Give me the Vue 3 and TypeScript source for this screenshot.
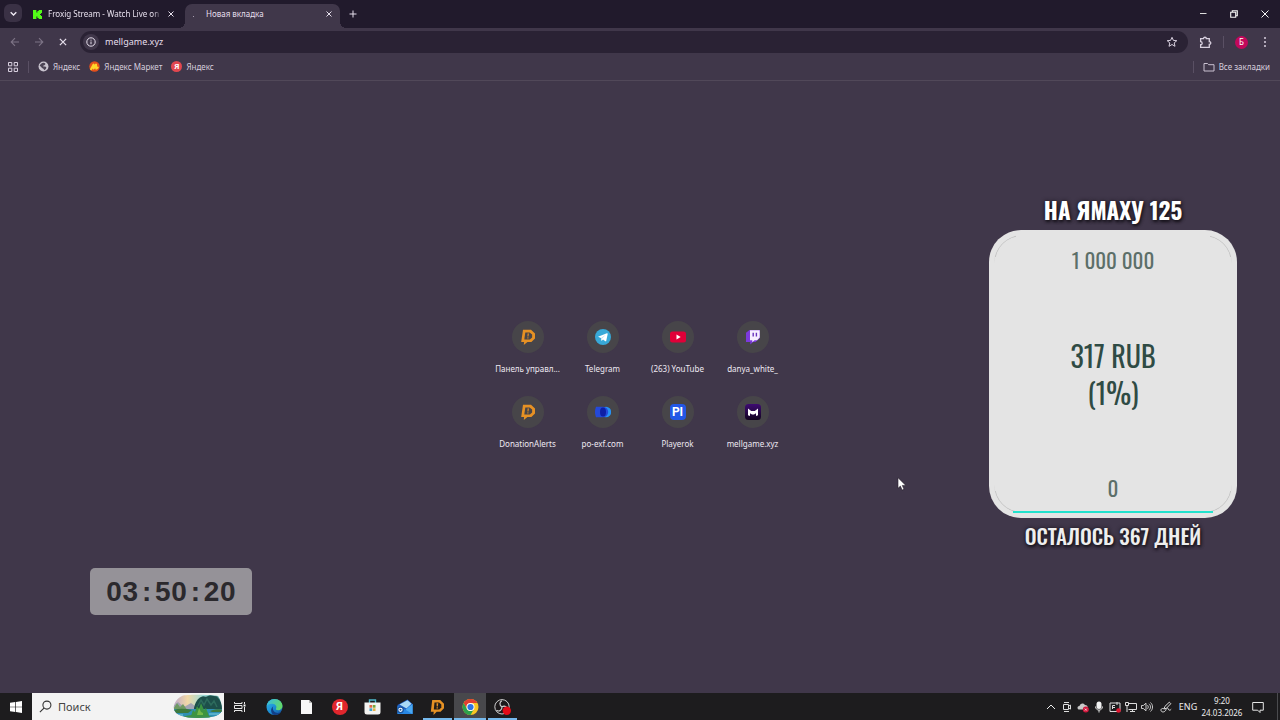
<script setup lang="ts">
import { ref } from 'vue'

interface LinkItem { label: string; icon: string; letter?: string }

const address = ref('mellgame.xyz')
const query = ref('')

const bookmarks: LinkItem[] = [
  { label: 'Яндекс', icon: 'globe' },
  { label: 'Яндекс Маркет', icon: 'market' },
  { label: 'Яндекс', icon: 'yandex-soft', letter: 'Я' },
]

const shortcuts: LinkItem[] = [
  { label: 'Панель управл...', icon: 'donation' },
  { label: 'Telegram', icon: 'telegram' },
  { label: '(263) YouTube', icon: 'youtube' },
  { label: 'danya_white_', icon: 'twitch' },
  { label: 'DonationAlerts', icon: 'donation' },
  { label: 'po-exf.com', icon: 'exchange' },
  { label: 'Playerok', icon: 'playerok', letter: 'PI' },
  { label: 'mellgame.xyz', icon: 'mellgame' },
]

const apps = [
  { label: 'Edge', icon: 'edge', state: '' },
  { label: 'Документ', icon: 'file', state: '' },
  { label: 'Яндекс', icon: 'yandex', letter: 'Я', state: '' },
  { label: 'Microsoft Store', icon: 'store', state: '' },
  { label: 'Почта', icon: 'mail', state: '' },
  { label: 'DonationAlerts', icon: 'donation-dark', state: 'open' },
  { label: 'Chrome', icon: 'chrome', state: 'open current' },
  { label: 'OBS', icon: 'obs', state: 'open' },
]

const tray = [
  { label: 'Скрытые значки', icon: 'chevron-up' },
  { label: 'Камера', icon: 'camera' },
  { label: 'OneDrive', icon: 'cloud' },
  { label: 'Микрофон', icon: 'mic' },
  { label: 'Безопасность', icon: 'shield' },
  { label: 'Сеть', icon: 'network' },
  { label: 'Звук', icon: 'sound' },
]

const timer = '03:50:20'.split('')
</script>

<template>
  <div class="desktop">
    <svg class="sprite" aria-hidden="true">
      <defs>
        <linearGradient id="g-edge" x1="0" y1="0" x2="1" y2="1">
          <stop offset="0" stop-color="#2fb6e8" /><stop offset="0.5" stop-color="#1c8fd6" /><stop offset="1" stop-color="#124f9e" />
        </linearGradient>
        <linearGradient id="g-edge2" x1="0" y1="0" x2="1" y2="0.4">
          <stop offset="0" stop-color="#35b8ea" /><stop offset="1" stop-color="#62d86b" />
        </linearGradient>
        <linearGradient id="g-mell" x1="0" y1="0" x2="0" y2="1">
          <stop offset="0" stop-color="#3e0b72" /><stop offset="1" stop-color="#12041f" />
        </linearGradient>
        <linearGradient id="g-sky" x1="0" y1="0" x2="1" y2="0">
          <stop offset="0" stop-color="#b9a5cf" /><stop offset="0.3" stop-color="#f1d8a6" /><stop offset="0.6" stop-color="#9fdcd8" /><stop offset="1" stop-color="#3e8f8a" />
        </linearGradient>
        <clipPath id="c-scene"><path d="M2 15C1 10 5 4 10 2c6-2 30-1 36 0 3 4 4 10 4 14-1 5-8 8-24 8C12 24 3 21 2 15Z" /></clipPath>
      </defs>
      <symbol id="i-kick" viewBox="0 0 9 9"><path d="M0 0h3.400v2.500h1V1h1.300V0H9v3H8v1H7v1h1v1h1v3H5.700V8H4.400V6.500h-1V9H0Z" fill="#53fc18" /></symbol>
      <symbol id="i-down" viewBox="0 0 8 8"><path d="m1.500 2.800 2.500 2.500 2.500-2.500" fill="none" stroke="#f0ebf5" stroke-width="1.200" /></symbol>
      <symbol id="i-close" viewBox="0 0 8 8"><path d="m1.500 1.500 5 5m0-5-5 5" fill="none" stroke="#e6dfec" stroke-width="1" /></symbol>
      <symbol id="i-plus" viewBox="0 0 8 8"><path d="M4 .5v7M.5 4h7" fill="none" stroke="#e6dfec" stroke-width="1" /></symbol>
      <symbol id="i-back" viewBox="0 0 10 10"><path d="M9 5H1.500M5 1.200 1.200 5 5 8.800" fill="none" stroke="#7d7486" stroke-width="1.100" /></symbol>
      <symbol id="i-forward" viewBox="0 0 10 10"><path d="M1 5h7.500M5 1.200 8.800 5 5 8.800" fill="none" stroke="#7d7486" stroke-width="1.100" /></symbol>
      <symbol id="i-info" viewBox="0 0 10 10"><circle cx="5" cy="5" r="4.200" fill="none" stroke="#e6dfec" /><path d="M5 4.500v2.700M5 2.700v1" stroke="#e6dfec" /></symbol>
      <symbol id="i-star" viewBox="0 0 12 12"><path d="m6 1.300 1.400 3.100 3.400.3-2.600 2.200.8 3.400L6 8.500l-3 1.800.8-3.400-2.600-2.200 3.400-.3Z" fill="none" stroke="#d8d0df" stroke-width="1" /></symbol>
      <symbol id="i-puzzle" viewBox="0 0 12 12"><path d="M1.500 2.500h2.700c0-1.800 2.600-1.800 2.600 0h2.700v2.700c1.900 0 1.900 2.600 0 2.600v2.700h-8V8c1.900 0 1.900-2.800 0-2.800Z" fill="none" stroke="#d8d0df" stroke-width="1.200" /></symbol>
      <symbol id="i-dots" viewBox="0 0 4 12"><circle cx="2" cy="2" r="1" /><circle cx="2" cy="6" r="1" /><circle cx="2" cy="10" r="1" /></symbol>
      <symbol id="i-grid" viewBox="0 0 12 12"><path d="M1.500 1.500h3.300v3.300H1.500ZM7.200 1.500h3.300v3.300H7.200ZM1.500 7.200h3.300v3.300H1.500ZM7.200 7.200h3.300v3.300H7.200Z" fill="none" stroke="#d8d0df" stroke-width="1" /></symbol>
      <symbol id="i-folder" viewBox="0 0 12 12"><path d="M1 2.500h3.500l1.200 1.200H11V10H1Z" fill="none" stroke="#c9c1d0" stroke-width="1" /></symbol>
      <symbol id="i-globe" viewBox="0 0 12 12"><circle cx="6" cy="6" r="5.400" fill="#c9c4cf" /><path d="M6.200 1.800c1.600.4 2.400 1.200 1.500 2.200-.9.900-2.200.4-2.200 1.700 1.300.6 2.700 0 3.400.9.500 1-.4 2.800-2.200 3.500-.3-1.400-.7-2-2-2.300C3.500 7.200 3 5.700 1.800 5.300c.5-2 2.200-3.500 4.400-3.500Z" fill="#4d4556" /></symbol>
      <symbol id="i-market" viewBox="0 0 12 12"><circle cx="6" cy="6" r="5.700" fill="#e5501c" /><path d="M2.200 8.900 5 3.900l.1 4.400 2.600-4.400.2 4.400 1.600-1.200" fill="none" stroke="#ffd62a" stroke-width="2.200" stroke-linejoin="round" stroke-linecap="round" /></symbol>
      <symbol id="i-donation" viewBox="0 0 16 16"><path d="M3 .8h8L15 4.600v4.900l-3.600 3.500H7.400l-3.600 3 .3-3H1.200Z" fill="#e69124" /><path d="M5.300 3.400h4.300l2.500 2.200v3l-2.200 2H4.300Z" fill="#474549" /><path d="m7.600 4.300 1.500.1-.5 3.100H7.300Zm-.3 3.900h1.200v1.200H7.200Z" fill="#c9822c" /></symbol>
      <symbol id="i-donation-dark" viewBox="0 0 16 16"><path d="M2.700 1h8L14.500 4.700v4.600L11 12.800H7.200L4 16l.2-3.200H1.300Z" fill="#e69124" /><path d="M5 3.600h4.600l2.200 2v2.900l-2 1.900H4.300Z" fill="#201c19" /><path d="m7 4.200 1.800.1-.5 3.100H7.200Zm.1 4h1.300v1.200H7Z" fill="#e69124" /></symbol>
      <symbol id="i-telegram" viewBox="0 0 16 16"><circle cx="8" cy="8" r="8" fill="#38a9d8" /><path d="m3 7.800 8.900-3.600c.5-.2.900.1.800.7l-1.500 7c-.1.500-.5.600-.9.300L8 10.500l-1.300 1.300-.4-.3-.4-2.400Z" fill="#fff" /><path d="m6 9.100 4.800-3.300-3.900 4-.2 1.900Z" fill="#bcdff0" /></symbol>
      <symbol id="i-youtube" viewBox="0 0 16 16"><rect y="2.500" width="16" height="11" rx="2.500" fill="#e00038" /><path d="m6.500 5.600 4.200 2.400-4.200 2.400Z" fill="#fff" /></symbol>
      <symbol id="i-twitch" viewBox="0 0 16 16"><path d="M1 3.700 4.500 1H15v8l-4.500 4H8l-2.700 2.500V13H1Z" fill="#7c39dc" /><path d="M5 1.200h9.700v7.400l-2.600 2.600H9.500l-2.200 2v-2H5Z" fill="#f7eeff" /><path d="M8.200 3.700v3.800m3.200-3.800v3.800" stroke="#6932bc" stroke-width="1.400" /></symbol>
      <symbol id="i-exchange" viewBox="0 0 16 16"><circle cx="11" cy="8" r="5.200" fill="#2692f5" /><path d="M1 2.800h7a5.200 5.200 0 0 1 0 10.400H1C.3 11 0 9.500 0 8s.3-3 1-5.200Z" fill="#2449d8" /><ellipse cx="8" cy="8" rx="3" ry="4.600" fill="#0e1fa5" /></symbol>
      <symbol id="i-mellgame" viewBox="0 0 16 16"><rect width="16" height="16" rx="3.500" fill="url(#g-mell)" /><path d="M3 4.500 6.200 7h3.600L13 4.500v6.700l-2 .8V9.200L9 10.400H7L5 9.200V12l-2-.8Z" fill="#fff" /></symbol>
      <symbol id="i-windows" viewBox="0 0 12 12"><path d="M0 1.700 5.300 1v4.700H0ZM6 .9 12 0v5.700H6ZM0 6.300h5.300V11L0 10.300ZM6 6.300h6V12l-6-.9Z" fill="#fff" /></symbol>
      <symbol id="i-search" viewBox="0 0 12 12"><circle cx="7.300" cy="4.700" r="3.700" fill="none" stroke="#333" stroke-width="1" /><path d="M4.600 7.400.8 11.200" stroke="#333" stroke-width="1" /></symbol>
      <symbol id="i-taskview" viewBox="0 0 12 12"><path d="M.5 1v1.500H8V1M.5 11V9.500H8V11M.5 4.500H8v3H.5ZM10.500 1v2m0 3v5" fill="none" stroke="#e8e8e8" stroke-width="1" /><path d="M9.500 3.500h2v2h-2Z" fill="#fff" /></symbol>
      <symbol id="i-edge" viewBox="0 0 16 16"><circle cx="8" cy="8" r="8" fill="url(#g-edge)" /><path d="M.2 7C.8 3 4 0 8 0c4.500 0 8 3.300 8 7 0 2.600-2 4.200-4.300 4.200-1.800 0-2.700-.8-2.200-1.700.9-1.300.4-4-2.600-4.600C4.500 4.400 1.500 5 .2 7Z" fill="url(#g-edge2)" /><path d="M6.800 7.300c-1.600 3 .8 6.400 4.200 6.600 1.600.1 3-.5 3.900-1.200-1.400 2.200-4 3.400-6.900 3.300-3.500-.9-4.900-6-1.200-8.700Z" fill="#123f88" /></symbol>
      <symbol id="i-file" viewBox="0 0 16 16"><path d="M2.500 1h8l3 3v11h-11Z" fill="#f7f7f7" /><path d="M10.500 1v3h3Z" fill="#bbb" /></symbol>
      <symbol id="i-store" viewBox="0 0 16 16"><path d="M5 4V1h6v3" fill="none" stroke="#4fb8cb" stroke-width="1.400" /><path d="M0 3.500h16V13a2.500 2.500 0 0 1-2.500 2.500h-11A2.500 2.500 0 0 1 0 13Z" fill="#f3f3f1" /><path d="M5 6h2.700v2.700H5Z" fill="#e06644" /><path d="M8.300 6H11v2.700H8.300Z" fill="#75a83b" /><path d="M5 9.300h2.700V12H5Z" fill="#3da1ce" /><path d="M8.300 9.300H11V12H8.300Z" fill="#e6b044" /></symbol>
      <symbol id="i-mail" viewBox="0 0 16 16"><path d="m1 6 10-5.500L16 5v10H1Z" fill="#1d5cc0" /><path d="m3 5.500 8-4.300 4 3.600-5 4.700Z" fill="#a9d9f6" /><path d="m1 7 8 3.800L16 5v10H1Z" fill="#2887e4" /><path d="M9 10.800 16 15V5Z" fill="#49a8f2" /><circle cx="4" cy="10.800" r="3.400" fill="#17539f" /><circle cx="4" cy="10.800" r="1.600" fill="none" stroke="#fff" stroke-width="1.100" /></symbol>
      <symbol id="i-chrome" viewBox="0 0 16 16"><circle cx="8" cy="8" r="8" fill="#f9c623" /><path d="M1.100 4A8 8 0 0 1 14.900 4H8a4 4 0 0 0-3.500 6Z" fill="#e13e32" /><path d="M1.100 4A8 8 0 0 0 8 16l3.500-6a4 4 0 0 1-7 0Z" fill="#2ca14d" /><circle cx="8" cy="8" r="4" fill="#fff" /><circle cx="8" cy="8" r="3.100" fill="#2e75e6" /></symbol>
      <symbol id="i-obs" viewBox="0 0 17 16"><circle cx="8" cy="7.800" r="7.200" fill="#1c191b" stroke="#cfcfcf" stroke-width="1" /><path d="M8 7.800C5 6.300 5.500 2.800 8 1.800M8 7.800c2.800-1.700 5.800.3 5.500 3M8 7.800C8.100 11.300 5.200 13 2.500 11.300" fill="none" stroke="#cfcfcf" stroke-width="1.200" /><circle cx="12.800" cy="11.700" r="4.200" fill="#e30b17" /></symbol>
      <symbol id="i-chevron-up" viewBox="0 0 12 12"><path d="m2 8 4-4 4 4" fill="none" stroke="#eee" stroke-width="1" /></symbol>
      <symbol id="i-camera" viewBox="0 0 12 12"><path d="M2.500 3.500h5v5h-5Zm5 1.600 2-1v4l-2-1M3 1.500h5M3 10.500h5" fill="none" stroke="#ddd" stroke-width="1" /></symbol>
      <symbol id="i-cloud" viewBox="0 0 12 12"><path d="M1.500 8.500C-.3 7.500.5 4.800 2.500 5 3 2 6.800 1.500 8 4c2.500 0 3.300 2 2.500 4.500Z" fill="#c9c9c9" /><circle cx="8.800" cy="8.600" r="3" fill="#d2173c" /><path d="m7.800 7.600 2 2m0-2-2 2" stroke="#fff" stroke-width=".7" /></symbol>
      <symbol id="i-mic" viewBox="0 0 12 12"><rect x="3.500" y=".5" width="5" height="7.500" rx="2.500" fill="#f2f2f2" /><path d="M2.500 5.500c0 4.800 7 4.800 7 0M6 9v2.500" fill="none" stroke="#ddd" stroke-width="1" /></symbol>
      <symbol id="i-shield" viewBox="0 0 12 12"><path d="M1 2h10v8.500H1Z M3.500 8V4.500H6M4 6.500h2M8 1v3" fill="none" stroke="#ddd" stroke-width="1" /><circle cx="9.500" cy="9.500" r="2.300" fill="#e0142f" /></symbol>
      <symbol id="i-network" viewBox="0 0 12 12"><path d="M3.500 2.500h8v6h-8M7.500 8.500v2M5 10.500h5M.5 1.500h3v3h-3ZM2 4.500V11" fill="none" stroke="#ddd" stroke-width="1" /></symbol>
      <symbol id="i-sound" viewBox="0 0 12 12"><path d="M.5 4.500h1.800L5 2.200v7.600L2.300 7.500H.5ZM6.500 4.200c1 1 1 2.600 0 3.600M8 2.800c2 1.800 2 4.600 0 6.400M9.500 1.500c2.700 2.500 2.700 6.500 0 9" fill="none" stroke="#ddd" stroke-width=".9" /></symbol>
      <symbol id="i-pen" viewBox="0 0 12 12"><path d="m4 8 .8-2.500 4.500-4.300 1.500 1.500L6.500 7.200ZM4 8C2 6.500.3 8.500 1.200 10c1 1.700 4 1 4.600-1 .6-2.200 2.400-2.300 2.600-.8.300 1.300 1.800 1.300 2.800 0" fill="none" stroke="#ddd" stroke-width="1" /></symbol>
      <symbol id="i-note" viewBox="0 0 12 12"><path d="M.7 1.500h10.600v7.700H8v2.300L5.700 9.200h-5Z" fill="none" stroke="#e6e6e6" stroke-width="1" /></symbol>
      <symbol id="i-scene" viewBox="0 0 52 26">
        <g clip-path="url(#c-scene)">
          <rect width="52" height="26" fill="url(#g-sky)" />
          <path d="M0 13 6 8l6 5 7-4 8 6v5H0Z" fill="#a3a4b4" />
          <path d="M0 17 5 9l3 4 3-3 5 7Z" fill="#6f9a63" />
          <path d="M22 14c1-5 4-10 7-11 3-2 4 1 7-1 4-2 6 1 8 0 4 3 6 8 7 13v4H22Z" fill="#1d4f4a" />
          <path d="m26 12 3-6 3 5 3-6 4 6 3-4 3 6" fill="none" stroke="#2d6b5c" stroke-width="1.500" />
          <rect y="15" width="52" height="11" fill="#2f8fb4" />
          <path d="M2 16c6-2 12-1 18 0l-4 3H4ZM38 17c5-2 9-2 14-1v2H40Z" fill="#3d7a3d" />
          <path d="M10 24c4-4 22-4 30-1l-6 3H14Z" fill="#3f9148" />
          <path d="m19 22 2-6 2 2 2-6 2 3 2-6 3 7 2-2 3 8Z" fill="#3c9440" /><path d="m25 21 2-7 2 4 2 1v2Z" fill="#72b848" />
          <path d="M37 20h12M3 21h8" stroke="#7fd0e0" stroke-width="1" />
        </g>
      </symbol>
      <symbol id="i-cursor" viewBox="0 0 10 14"><path d="M1 .7v10.600l2.400-2.200 1.700 4 1.900-.8L5.300 8.400h3.500Z" fill="#fff" stroke="#26202c" stroke-width=".6" /></symbol>
    </svg>

    <header class="tabs">
      <button class="tab-search" aria-label="Поиск вкладок"><svg width="9" height="9"><use href="#i-down" /></svg></button>
      <div class="tab">
        <svg width="9" height="9"><use href="#i-kick" /></svg>
        <span class="tab-title fade">Froxig Stream - Watch Live on Kick</span>
        <button class="icon-btn small" aria-label="Закрыть вкладку"><svg width="8" height="8"><use href="#i-close" /></svg></button>
      </div>
      <div class="tab active">
        <span class="spinner"></span>
        <span class="tab-title">Новая вкладка</span>
        <button class="icon-btn small" aria-label="Закрыть вкладку"><svg width="8" height="8"><use href="#i-close" /></svg></button>
      </div>
      <button class="icon-btn new-tab" aria-label="Новая вкладка"><svg width="8" height="8"><use href="#i-plus" /></svg></button>
      <div class="window-controls">
        <button aria-label="Свернуть"><svg width="8" height="8" viewBox="0 0 8 8"><path d="M1 3.500h6.500" stroke="#ddd" stroke-width="1" /></svg></button>
        <button aria-label="Восстановить"><svg width="8" height="8" viewBox="0 0 8 8"><path d="M.7 2.300h5v5h-5ZM2.300 2.300V.7h5v5H5.700" fill="none" stroke="#f5f5f5" stroke-width="1.100" /></svg></button>
        <button aria-label="Закрыть"><svg width="8" height="8" viewBox="0 0 8 8"><path d="m.5.500 7 7m0-7-7 7" stroke="#f5f5f5" stroke-width="1" /></svg></button>
      </div>
    </header>

    <nav class="toolbar">
      <button class="icon-btn" aria-label="Назад"><svg width="10" height="10"><use href="#i-back" /></svg></button>
      <button class="icon-btn" aria-label="Вперёд"><svg width="10" height="10"><use href="#i-forward" /></svg></button>
      <button class="icon-btn" aria-label="Остановить"><svg width="10" height="10"><use href="#i-close" /></svg></button>
      <div class="omnibox">
        <button class="site-info" aria-label="Сведения о сайте"><svg width="10" height="10"><use href="#i-info" /></svg></button>
        <input v-model="address" class="address" type="text" aria-label="Адресная строка" />
        <button class="icon-btn" aria-label="Добавить в закладки"><svg width="12" height="12"><use href="#i-star" /></svg></button>
      </div>
      <button class="icon-btn extensions" aria-label="Расширения"><svg width="13" height="13"><use href="#i-puzzle" /></svg></button>
      <span class="rule"></span>
      <button class="avatar">Б</button>
      <button class="icon-btn menu" aria-label="Меню"><svg width="4" height="12" fill="#d8d0df"><use href="#i-dots" /></svg></button>
    </nav>

    <nav class="bookmarks">
      <button class="icon-btn" aria-label="Приложения"><svg width="12" height="12"><use href="#i-grid" /></svg></button>
      <span class="rule"></span>
      <a v-for="(b, i) in bookmarks" :key="i" href="#" class="bookmark">
        <span v-if="b.letter" :class="['letter', b.icon]">{{ b.letter }}</span>
        <svg v-else width="11" height="11"><use :href="'#i-' + b.icon" /></svg>
        <span>{{ b.label }}</span>
      </a>
      <span class="rule push"></span>
      <button class="bookmark all"><svg width="12" height="12"><use href="#i-folder" /></svg>Все закладки</button>
    </nav>

    <main class="page">
      <div class="shortcuts">
        <a v-for="s in shortcuts" :key="s.label" href="#" class="shortcut">
          <span class="disc">
            <span v-if="s.letter" :class="['letter', s.icon]">{{ s.letter }}</span>
            <svg v-else width="16" height="16"><use :href="'#i-' + s.icon" /></svg>
          </span>
          <span class="shortcut-label">{{ s.label }}</span>
        </a>
      </div>

      <div class="timer"><span v-for="(c, i) in timer" :key="i">{{ c }}</span></div>

      <section class="goal">
        <h2 class="goal-title">НА ЯМАХУ 125</h2>
        <div class="goal-card">
          <span class="goal-limit">1 000 000</span>
          <p class="goal-sum">317 RUB<br />(1%)</p>
          <span class="goal-limit">0</span>
          <span class="goal-bar"></span>
        </div>
        <p class="goal-left">ОСТАЛОСЬ 367 ДНЕЙ</p>
      </section>

      <svg class="cursor" width="10" height="14"><use href="#i-cursor" /></svg>
    </main>

    <footer class="taskbar">
      <button class="start" aria-label="Пуск"><svg width="12" height="12"><use href="#i-windows" /></svg></button>
      <label class="search">
        <svg width="13" height="13"><use href="#i-search" /></svg>
        <input v-model="query" type="text" placeholder="Поиск" aria-label="Поиск" />
        <svg width="52" height="26"><use href="#i-scene" /></svg>
      </label>
      <button class="task-view" aria-label="Представление задач"><svg width="12" height="12"><use href="#i-taskview" /></svg></button>
      <div class="apps">
        <button v-for="a in apps" :key="a.label" :class="['app', a.state]" :aria-label="a.label">
          <span v-if="a.letter" :class="['letter', a.icon]">{{ a.letter }}</span>
          <svg v-else width="17" height="16"><use :href="'#i-' + a.icon" /></svg>
        </button>
      </div>
      <div class="tray">
        <button v-for="t in tray" :key="t.label" class="tray-btn" :aria-label="t.label"><svg width="12" height="12"><use :href="'#i-' + t.icon" /></svg></button>
        <button class="tray-btn wide" aria-label="Рукописный ввод"><svg width="12" height="12"><use href="#i-pen" /></svg></button>
        <button class="tray-btn wide">ENG</button>
        <button class="clock"><span>9:20</span><span>24.03.2026</span></button>
        <button class="tray-btn note" aria-label="Уведомления"><svg width="12" height="12"><use href="#i-note" /></svg></button>
      </div>
    </footer>
  </div>
</template>

<style>
html, body { margin: 0; background: #40374a; }
</style>

<style scoped>
* { box-sizing: border-box; }
.desktop {
  display: flex;
  flex-direction: column;
  min-height: 100vh;
  background: #40374a;
  color: #e6dfec;
  font: 8px/12px "Segoe UI", "Noto Sans", "Open Sans", sans-serif;
}
.sprite { position: absolute; width: 0; height: 0; }
svg { display: block; flex: none; }
button {
  display: flex;
  align-items: center;
  justify-content: center;
  padding: 0;
  border: 0;
  background: none;
  color: inherit;
  font: inherit;
}
a { color: inherit; text-decoration: none; }
input { min-width: 0; padding: 0; border: 0; outline: 0; background: none; color: inherit; font: inherit; }
.rule { width: 1px; height: 12px; background: #5a5064; }

.letter { display: flex; flex: none; align-items: center; justify-content: center; color: #fff; font-family: Roboto, "Open Sans", sans-serif; font-weight: 700; }
.yandex-soft { width: 11px; height: 11px; border-radius: 50%; background: #e2474f; font-size: 8px; }
.yandex { width: 16px; height: 16px; border-radius: 50%; background: #e0262d; font-size: 11px; }
.playerok { width: 16px; height: 16px; border-radius: 4px; background: #2257e6; font-size: 12px; }

.tabs { display: flex; height: 28px; padding-left: 4px; background: #211a2c; }
.tab-search { width: 18px; height: 18px; margin-top: 4px; border-radius: 6px; background: #3a3145; }
.tab { display: flex; align-items: center; width: 155px; height: 24px; margin-top: 4px; padding: 0 8px 4px 10px; }
.tab:not(.active) { width: 163px; padding: 0 9px 4px 11px; }
.tab-title { flex: 1; margin: 0 4px 0 6px; overflow: hidden; white-space: nowrap; }
.fade { mask-image: linear-gradient(90deg, #000 92%, transparent); }
.active { position: relative; padding-right: 6px; border-radius: 7px 7px 0 0; background: #40374a; }
.active::before, .active::after { content: ""; position: absolute; bottom: 0; width: 6px; height: 6px; }
.active::before { right: 100%; background: radial-gradient(circle at 0 0, transparent 6px, #40374a 6px); }
.active::after { left: 100%; background: radial-gradient(circle at 100% 0, transparent 6px, #40374a 6px); }
.active .tab-title { margin-left: 12px; }
.spinner { width: 1px; height: 1px; margin: 4px 0 0 -2px; background: #a69caf; }
.icon-btn { flex: none; width: 24px; height: 20px; }
.icon-btn.small { width: 10px; }
.new-tab { height: 27px; margin-left: 1px; }
.window-controls { display: flex; margin-left: auto; }
.window-controls button { width: 31px; height: 27px; }

.toolbar { display: flex; align-items: center; height: 28px; padding-left: 3px; }
.omnibox { display: flex; flex: 1; align-items: center; height: 22px; margin-left: 5px; padding: 0 4px 0 3px; border-radius: 11px; background: #2a2234; }
.site-info { width: 16px; height: 16px; border-radius: 8px; background: #40374a; }
.address { flex: 1; margin-left: 6px; font-size: 9px; }
.extensions { margin: 0 6px 0 5px; }
.avatar { width: 13px; height: 13px; margin: 0 11px; border-radius: 7px; background: #c2085b; color: #fff; }
.menu { width: 12px; margin-right: 9px; }

.bookmarks { display: flex; align-items: center; height: 25px; padding: 0 10px 3px 1px; border-bottom: 1px solid #514859; }
.bookmarks > .rule { margin-left: 3px; }
.bookmarks > .push { margin-left: auto; }
.bookmark { display: flex; align-items: center; gap: 4px; margin-left: 9px; white-space: nowrap; color: #d6cedd; }

.page { position: relative; display: flex; flex: 1; align-items: flex-start; justify-content: center; padding-top: 234px; }
.shortcuts { display: grid; grid-template-columns: repeat(4, 75px); }
.shortcut { display: flex; flex-direction: column; align-items: center; height: 75px; padding-top: 6px; color: #eee9f2; }
.disc { display: flex; align-items: center; justify-content: center; width: 32px; height: 32px; border-radius: 16px; background: #474549; }
.shortcut-label { margin-top: 10px; white-space: nowrap; }

.timer {
  position: absolute;
  bottom: 78px;
  left: 90px;
  display: flex;
  width: 162px;
  padding: 7px 16px;
  border-radius: 5px;
  background: #959298;
  color: #2b292d;
  font: 700 28px/33px "Liberation Sans", Arial, sans-serif;
}
.timer span { flex: 1; text-align: center; }

.goal { position: absolute; top: 111px; right: 43px; width: 248px; font-family: Oswald, "Roboto Condensed", "Open Sans", sans-serif; text-align: center; }
.goal-title, .goal-left { margin: 0; color: #fff; text-shadow: 1px 2px 3px #17131b, 0 0 4px #17131b; white-space: nowrap; }
.goal-title { padding-bottom: 1px; font-size: 23px; font-weight: 700; line-height: 37px; }
.goal-left { color: #eee; font-size: 21px; font-weight: 500; line-height: 35px; }
.goal-card {
  position: relative;
  display: flex;
  flex-direction: column;
  align-items: center;
  justify-content: space-between;
  height: 288px;
  padding: 15px 0;
  border-radius: 32px;
  background: #e4e4e4;
  color: #5c6f69;
}
.goal-card::before {
  content: "";
  position: absolute;
  inset: 5px;
  border: 1px solid #c2c2c2;
  border-radius: 28px;
  mask:
    linear-gradient(#000 22px, transparent 22px calc(100% - 22px), #000 0),
    linear-gradient(90deg, #000 22px, transparent 22px calc(100% - 22px), #000 0);
  mask-composite: intersect;
}
.goal-limit { font-size: 21px; line-height: 30px; }
.goal-sum { margin: 0; color: #2f4b44; font-size: 28px; line-height: 37px; }
.goal-bar { position: absolute; right: 24px; bottom: 5px; left: 24px; height: 2px; background: #22e2cd; }
.cursor { position: absolute; top: 396px; left: 897px; }

.taskbar { display: flex; height: 27px; background: #1d1c1e; color: #eee; }
.start { width: 32px; }
.search { display: flex; align-items: center; width: 192px; padding-left: 7px; background: #f3f3f3; color: #333; }
.search input { flex: 1; margin-left: 6px; font-size: 11px; }
.search input::placeholder { color: #444; opacity: 1; }
.task-view { width: 32px; margin-right: 2px; }
.apps { display: grid; grid-template-columns: repeat(8, 1fr); width: 261px; }
.app { position: relative; }
.current { background: #48484c; }
.open::after { content: ""; position: absolute; right: 2px; bottom: 0; left: 2px; height: 2px; background: #76b9ed; }
.current::after { right: 0; left: 0; }
.tray { display: flex; margin-right: 2px; margin-left: auto; padding-right: 6px; border-right: 1px solid #4b4b4e; }
.tray-btn { width: 16px; }
.wide { width: 22px; font-size: 9px; }
.clock { flex-direction: column; width: 46px; }
.note { width: 26px; }
</style>
